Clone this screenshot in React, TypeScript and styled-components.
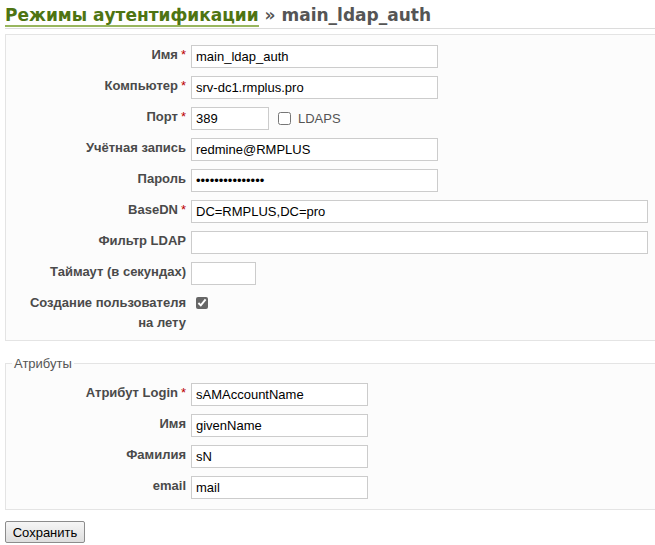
import styled, { createGlobalStyle } from "styled-components";

const GlobalStyle = createGlobalStyle`
  html, body {
    margin: 0;
    padding: 0;
    background: #fff;
    overflow: hidden;
  }
  body {
    font-family: "Liberation Sans", Arial, sans-serif;
    font-size: 13px;
    color: #484848;
  }
`;

const Page = styled.div`
  width: 660px;
  padding: 0 0 0 5px;
`;

const Title = styled.h2`
  margin: 0 0 5px;
  padding: 2px 0 0;
  font-family: "DejaVu Sans", Verdana, sans-serif;
  font-size: 17px;
  font-weight: bold;
  line-height: 26px;
  color: #555;
  border-bottom: 1px solid #dcdcdc;
  white-space: nowrap;
`;

const Crumb = styled.span`
  color: #4e7412;
  border-bottom: 2px solid #98b65e;
`;

const Box = styled.div`
  background: #fcfcfc;
  border: 1px solid #e4e4e4;
  padding: 10px 0 7px;
`;

const Fieldset = styled.fieldset`
  margin: 15px 0 0;
  padding: 12px 0 10px;
  background: #fcfcfc;
  border: 1px solid #e4e4e4;
  min-inline-size: 0;
`;

const Legend = styled.legend`
  margin-left: 6px;
  padding: 0 2px;
  font-size: 13px;
  color: #555;
`;

const Row = styled.div`
  display: flex;
  align-items: flex-start;
  gap: 5px;
  padding-left: 15px;
  & + & {
    margin-top: 8px;
  }
`;

const Label = styled.label`
  flex: 0 0 165px;
  text-align: right;
  font-weight: bold;
  font-size: 13px;
  line-height: 20px;
  color: #4a4a4a;
`;

const Required = styled.span`
  color: #bb0000;
  font-weight: normal;
  margin-left: 3px;
`;

const Input = styled.input<{ $w: number }>`
  box-sizing: border-box;
  width: ${({ $w }) => $w}px;
  height: 23px;
  margin: 0;
  padding: 0 4px;
  border: 1px solid #cccccc;
  background: #fff;
  font-family: "Liberation Sans", Arial, sans-serif;
  font-size: 13px;
  color: #000;
  outline: none;
`;

const Check = styled.input`
  width: 12px;
  height: 12px;
  margin: 4px 0 0 5px;
  accent-color: #666;
`;

const Inline = styled.div`
  display: flex;
  align-items: center;
  height: 23px;
  gap: 7px;
  margin-left: 4px;
  color: #555;
`;

const SmallCheck = styled.input`
  width: 13px;
  height: 13px;
  margin: 0;
`;

const Submit = styled.button`
  margin-top: 11px;
  width: 80px;
  height: 22px;
  padding: 0;
  font-family: "Liberation Sans", Arial, sans-serif;
  font-size: 13px;
  color: #000;
  border: 1px solid #8c8c8c;
  border-radius: 2px;
  background: linear-gradient(#f6f6f6, #dedede);
`;

function Field({ label, required, children }: { label: string; required?: boolean; children: React.ReactNode }) {
  return (
    <Row>
      <Label>
        {label}
        {required && <Required>*</Required>}
      </Label>
      {children}
    </Row>
  );
}

export default function App() {
  return (
    <Page>
      <GlobalStyle />
      <Title>
        <Crumb>Режимы аутентификации</Crumb> » main_ldap_auth
      </Title>

      <Box>
        <Field label="Имя" required>
          <Input $w={247} defaultValue="main_ldap_auth" readOnly />
        </Field>
        <Field label="Компьютер" required>
          <Input $w={247} defaultValue="srv-dc1.rmplus.pro" readOnly />
        </Field>
        <Field label="Порт" required>
          <Input $w={78} defaultValue="389" readOnly />
          <Inline>
            <SmallCheck type="checkbox" />
            LDAPS
          </Inline>
        </Field>
        <Field label="Учётная запись">
          <Input $w={247} defaultValue="redmine@RMPLUS" readOnly />
        </Field>
        <Field label="Пароль">
          <Input $w={247} type="password" defaultValue="xxxxxxxxxxxxxxx" readOnly />
        </Field>
        <Field label="BaseDN" required>
          <Input $w={457} defaultValue="DC=RMPLUS,DC=pro" readOnly />
        </Field>
        <Field label="Фильтр LDAP">
          <Input $w={457} defaultValue="" readOnly />
        </Field>
        <Field label="Таймаут (в секундах)">
          <Input $w={65} defaultValue="" readOnly />
        </Field>
        <Field label="Создание пользователя на лету">
          <Check type="checkbox" defaultChecked />
        </Field>
      </Box>

      <Fieldset>
        <Legend>Атрибуты</Legend>
        <Field label="Атрибут Login" required>
          <Input $w={177} defaultValue="sAMAccountName" readOnly />
        </Field>
        <Field label="Имя">
          <Input $w={177} defaultValue="givenName" readOnly />
        </Field>
        <Field label="Фамилия">
          <Input $w={177} defaultValue="sN" readOnly />
        </Field>
        <Field label="email">
          <Input $w={177} defaultValue="mail" readOnly />
        </Field>
      </Fieldset>

      <Submit>Сохранить</Submit>
    </Page>
  );
}
